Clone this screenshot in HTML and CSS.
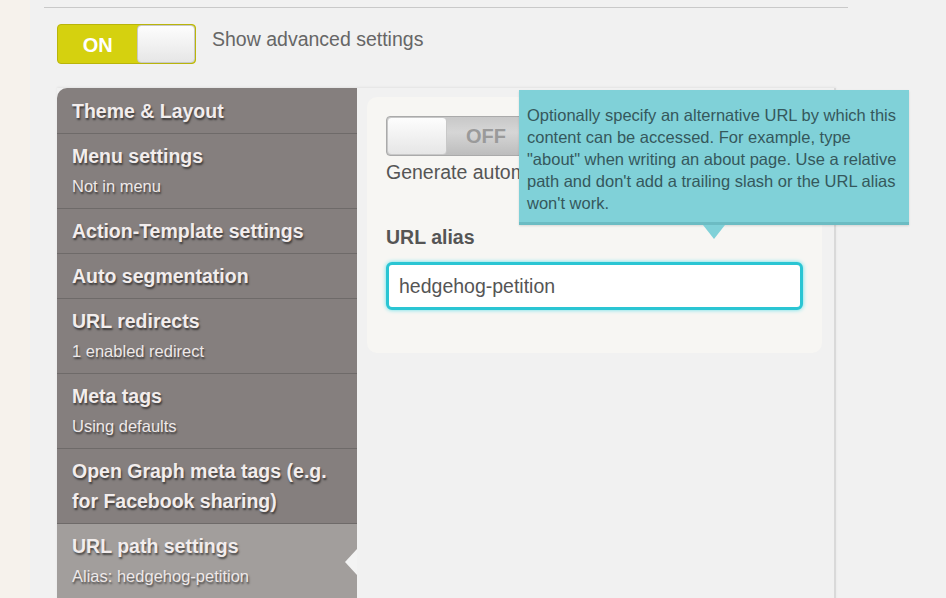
FILE: index.html
```html
<html>
    <head>
        <meta charset="UTF-8">
        <link rel="stylesheet" href="styles.css">
    </head>
    <body>
        <div class="page">
            <div class="rule"></div>

            <div class="adv-row">
                <div class="switch switch-on">
                    <span class="switch-label">ON</span>
                    <span class="knob"></span>
                </div>
                <span class="adv-text">Show advanced settings</span>
            </div>

            <div class="panel">
                <ul class="tabs">
                    <li class="tab"><div class="tab-title">Theme &amp; Layout</div></li>
                    <li class="tab"><div class="tab-title">Menu settings</div><div class="tab-sub">Not in menu</div></li>
                    <li class="tab"><div class="tab-title">Action-Template settings</div></li>
                    <li class="tab"><div class="tab-title">Auto segmentation</div></li>
                    <li class="tab"><div class="tab-title">URL redirects</div><div class="tab-sub">1 enabled redirect</div></li>
                    <li class="tab"><div class="tab-title">Meta tags</div><div class="tab-sub">Using defaults</div></li>
                    <li class="tab"><div class="tab-title">Open Graph meta tags (e.g.<br>for Facebook sharing)</div></li>
                    <li class="tab active"><div class="tab-title">URL path settings</div><div class="tab-sub">Alias: hedgehog-petition</div></li>
                </ul>

                <div class="pane">
                    <div class="card">
                        <div class="switch switch-off">
                            <span class="knob"></span>
                            <span class="switch-label">OFF</span>
                        </div>
                        <!-- the rest of this label is hidden under the popup -->
                        <div class="gen-text">Generate automatic URL alias</div>

                        <label class="field-label" for="alias">URL alias</label>
                        <input class="field" id="alias" type="text" value="hedgehog-petition">

                        <!-- description popup, sits over the toggle -->
                        <div class="tip">
                            Optionally specify an alternative URL by which this
                            content can be accessed. For example, type
                            "about" when writing an about page. Use a relative
                            path and don't add a trailing slash or the URL alias
                            won't work.
                        </div>
                    </div>
                </div>
            </div>
        </div>
    </body>
</html>
```

FILE: styles.css
```css
html, body {
    margin: 0px;
    height: 100%;
    overflow: hidden;
    font-family: "Liberation Sans", Arial, sans-serif;
    background: #f6f2ec;
}

.page {
    margin-left: 30px;
    min-height: 100%;
    background: #f1f1f1;
    padding: 7px 0 0 27px;
    box-sizing: border-box;
}

.rule {
    height: 1px;
    background: #c9c9c9;
    width: 804px;
    margin-left: -13px;
}

/* toggles */
.adv-row {
    display: flex;
    align-items: flex-start;
    gap: 16px;
    margin-top: 16px;
    height: 64px;
}
.adv-text {
    font-size: 19.5px;
    color: #666;
    line-height: 30px;
}

.switch {
    display: flex;
    height: 40px;
    border-radius: 4px;
    overflow: hidden;
    box-sizing: border-box;
}
.switch .knob {
    display: block;
    background: linear-gradient(#fdfdfd, #e6e6e6);
    border: 1px solid #c8c8c8;
    border-radius: 4px;
    box-sizing: border-box;
}
.switch-label {
    font-weight: bold;
    font-size: 20px;
    line-height: 40px;
    text-align: center;
}
.switch-on {
    width: 139px;
    background: #d5d10f;
    border: 1px solid #b9b50a;
}
.switch-on .switch-label {
    width: 80px;
    color: #fff;
}
.switch-on .knob {
    width: 58px;
}
.switch-off {
    width: 160px;
    background: linear-gradient(#c8c8c8, #d6d6d6 40%, #bdbdbd);
    border: 1px solid #aaa;
}
.switch-off .knob {
    width: 60px;
    height: 38px;
}
.switch-off .switch-label {
    width: 78px;
    color: #9a9a9a;
    line-height: 38px;
}

/* vertical tabs */
.panel {
    display: flex;
    width: 779px;
    box-shadow: 0 -1px 2px rgba(0,0,0,0.06);
}
.tabs {
    list-style: none;
    margin: 0;
    padding: 1px 0 0 0;
    width: 300px;
    flex: none;
    background: #857f7e;
    border-top-left-radius: 10px;
}
.tab {
    position: relative;
    padding: 7px 15px 7px 15px;
    border-bottom: 1px solid #6e6a69;
    color: #f2eded;
    text-shadow: 1px 2px 2px rgba(0,0,0,0.55);
}
.tab-title {
    font-weight: bold;
    font-size: 19.5px;
    line-height: 30px;
}
.tab-sub {
    font-size: 16.5px;
    line-height: 30px;
    color: #eee9e9;
}
.tab.active {
    background: #a29e9c;
    border-bottom: none;
}
.tab.active::after {
    content: "";
    position: absolute;
    right: 0;
    top: 25px;
    border: 13px solid transparent;
    border-right: 12px solid #f3f3f3;
    border-left: none;
}

.pane {
    flex: 1;
    border-right: 2px solid #d9d9d9;
    padding: 9px 12px 0 10px;
    min-height: 510px;
}
.card {
    position: relative;
    background: #f7f6f3;
    border-radius: 10px;
    padding: 19px 19px 43px 19px;
}
.gen-text {
    font-size: 19.5px;
    color: #555;
    margin-top: 2px;
    line-height: 28px;
    width: 133px;
    white-space: nowrap;
    overflow: hidden;
}
.field-label {
    display: block;
    font-weight: bold;
    font-size: 19.5px;
    color: #555;
    margin-top: 37px;
    line-height: 28px;
}
.field {
    display: block;
    width: 100%;
    height: 48px;
    margin-top: 11px;
    box-sizing: border-box;
    border: 3px solid #2ac5d3;
    border-radius: 6px;
    box-shadow: 0 0 4px #5fe0ea;
    padding: 0 10px;
    font-family: "Liberation Sans", Arial, sans-serif;
    font-size: 19.5px;
    color: #555;
    background: #fff;
    outline: none;
}

/* tooltip */
.tip {
    position: absolute;
    left: 152px;
    top: -7px;
    width: 374px;
    padding: 14px 8px 8px 8px;
    background: #80d1d8;
    border-bottom: 3px solid #6cbcc3;
    color: #35585c;
    font-size: 16.5px;
    line-height: 22px;
    box-shadow: 0 1px 2px rgba(0,0,0,0.12);
}
.tip::after {
    content: "";
    position: absolute;
    left: 184px;
    bottom: -17px;
    border: 11px solid transparent;
    border-top: 14px solid #80d1d8;
    border-bottom: none;
}
```
